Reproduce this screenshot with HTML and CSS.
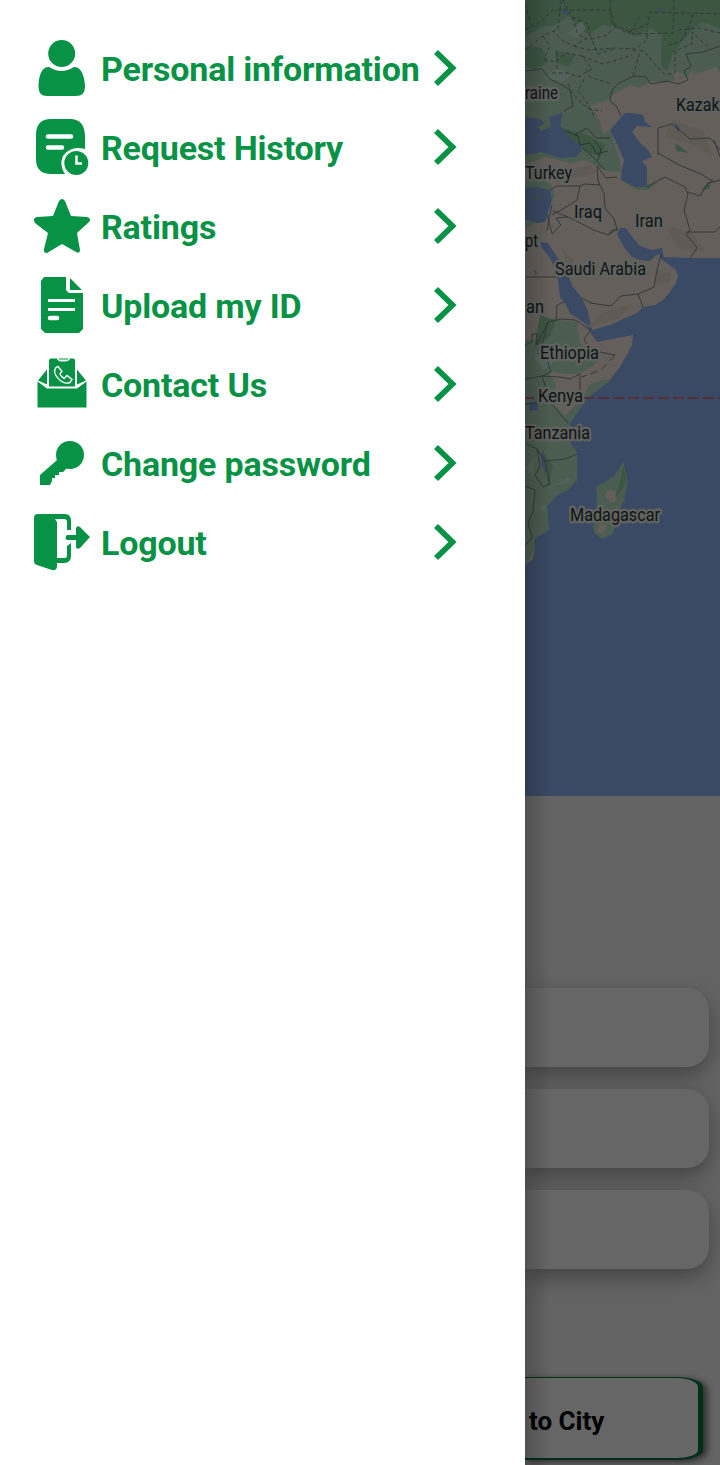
FILE: index.html
```html
<!DOCTYPE html>
<html lang="en">
<head>
<meta charset="utf-8">
<title>Menu</title>
<link rel="stylesheet" href="styles.css">
</head>
<body>
<div class="screen">
  <nav class="drawer">
    <a class="item"><svg class="icon" viewBox="0 0 56 56"><circle cx="27.700" cy="13.500" r="13.500"/><path d="M15 27Q27.500 35 40 27C47 26 51 37 51 47Q51 56 42 56H13Q4.500 56 4.500 47C4.500 36 8 26 15 27Z"/></svg><span class="label">Personal information</span><svg class="chevron" viewBox="0 0 24 38"><path d="M3 3L19.500 19L3 35"/></svg></a>
    <a class="item"><svg class="icon" viewBox="0 0 56 56"><path d="M17 0H36Q51 0 51 18V30Q37 26 29 37Q25 46 31 55H17Q2 55 2 40V16Q2 0 17 0Z"/><path class="cut" d="M14 17.500H37M14 28.500H28"/><circle cx="42.300" cy="44" r="12"/><path class="cut thin" d="M42.500 36.500V44.500H48"/></svg><span class="label">Request History</span><svg class="chevron" viewBox="0 0 24 38"><path d="M3 3L19.500 19L3 35"/></svg></a>
    <a class="item"><svg class="icon" viewBox="0 -1 56 56"><path d="M25 2Q28 -2 31 2L37 17L53 18Q58 20 55 23L43 34L46 51Q46 55 42 53L28 45L13 54Q9 54 10 50L14 34L1 24Q-2 19 3 18L19 17Z"/></svg><span class="label">Ratings</span><svg class="chevron" viewBox="0 0 24 38"><path d="M3 3L19.500 19L3 35"/></svg></a>
    <a class="item"><svg class="icon" viewBox="0 0 56 56"><path d="M10 0H32V13L35 16H49V52L45 56H11L7 52V4ZM36 1L48 13H36Z"/><path class="cut butt" d="M14 23.500H41M14 32.500H41"/><path class="cut" d="M16 41H23"/></svg><span class="label">Upload my ID</span><svg class="chevron" viewBox="0 0 24 38"><path d="M3 3L19.500 19L3 35"/></svg></a>
    <a class="item"><svg class="icon" viewBox="0 0 56 56"><path d="M15 5Q15 3 17 3H23Q24 6 27 6H31Q35 6 36 3H39Q41 3 41 5V31H15ZM25 3H34V4H25ZM13 14V29L4 25ZM43 14L52 25L43 29ZM3.500 26L13 33H43L52.500 26V52H3.500Z" transform="translate(0 -.5)"/><path class="phone" d="M22 11.500C17 17.500 28 29.500 36 26.500L38 23.500L33 19.500L30 22.500Q26 19.500 26 17.500L28 15.500L24 10.500Z"/></svg><span class="label">Contact Us</span><svg class="chevron" viewBox="0 0 24 38"><path d="M3 3L19.500 19L3 35"/></svg></a>
    <a class="item"><svg class="icon" viewBox="0 0 56 56"><circle cx="36" cy="20" r="14"/><path d="M22 25L22 26L6 40V50H16L18 46V43H21V40H25V37H29L34 32Z"/></svg><span class="label">Change password</span><svg class="chevron" viewBox="0 0 24 38"><path d="M3 3L19.500 19L3 35"/></svg></a>
    <a class="item"><svg class="icon" viewBox="0 0 56 56"><path d="M4 0H31Q37 0 37 7V16H33V8Q33 5 30 5H21L23 8V44H31Q33 44 33 41V32L37 29V42Q37 49 30 49H23V53Q22 57 18 56L3 51Q0 50 0 47V4Q0 0 4 0Z"/><path d="M33 21H42V14Q43 11 46 13L56 23L46 34Q43 36 42 33V26H33Q30 24 33 21Z"/></svg><span class="label">Logout</span><svg class="chevron" viewBox="0 0 24 38"><path d="M3 3L19.500 19L3 35"/></svg></a>
  </nav>
  <main class="page">
    <svg class="map" viewBox="525 0 195 796">
      <path class="land" d="M525 0H720V258H690L664 257L662 248L652 250L640 246L633 238L626 228H620L617 234L624 247L632 257L640 260L650 261L655 256L660 254L661 259L668 264L676 270L678 277L676 283L669 293L663 300L655 305L643 307L637 313L610 325L592 330L588 312L582 298L573 287L567 272L559 260L548 243L541 242V247L550 258L557 273L560 297L565 303L570 313L587 325L592 335L597 342L633 335L632 345L620 367L607 383L587 398L570 423V442L577 453V480L568 490L557 495L547 506L549 530L535 538V550L532 560L525 565Z"/>
      <path class="green" d="M525 0H720V72L715 67L708 75L690 72L686 80L665 83L652 81L640 88L630 85L612 95L608 100L590 107L597 115L600 122L603 134L610 130L618 155L622 172L608 171L598 167L585 160L570 163L545 157L525 165V125ZM525 180L537 178L551 184L555 195L549 208L545 190L525 188ZM525 222H537L529 227H525ZM621 180L634 187L658 182L648 190H637ZM525 340L538 339L548 325L558 320L577 322L580 343L600 360L582 373L568 374L548 372L556 385L549 400L565 416L583 398L589 385L604 379L610 381L587 398L570 423V442L577 453V480L568 490L557 495L547 506L549 530L535 538V550L525 565Z"/>
      <path class="forest" d="M525 0H720V28L702 22L690 32L672 54L667 71L661 65L662 35L650 28L635 37L618 27L602 25L589 35L568 16L554 25L540 27L525 38ZM527 46L542 48L548 62L535 70L525 66ZM555 50L575 55L569 67L557 63ZM540 315L556 320L550 336L534 348ZM559 127L585 134L605 145L601 157L580 149ZM701 190L713 178L709 189ZM543 452L553 466L548 487ZM675 143L689 153L677 151Z"/>
      <path class="steppe" d="M608 101L596 105L601 118L605 134L612 127L606 115ZM590 106L600 102L604 109ZM616 95L646 88L682 78L717 67L720 80V111L690 119L674 111L650 117L631 103ZM672 70L685 75L675 80Z"/>
      <path class="desert" d="M672 120L704 132L713 157L688 143L665 137ZM555 172L590 165L598 172L570 179ZM562 248L575 261L570 271ZM665 226L692 233L705 252L679 249ZM655 268L672 274L669 283L656 284ZM586 328L602 313L634 303L620 318Z"/>
      <path class="patch" d="M568 33L582 21L586 29L575 38ZM543 78L557 68L571 75L563 82ZM534 358L544 350L554 363L544 370ZM552 486L569 477L572 482ZM539 508L546 503L544 513ZM526 467L535 457L533 477Z"/>
      <path class="sea" d="M525 117L540 119L545 123L538 127L541 131L551 127L549 117L563 113L560 125L570 138L582 146L581 152L575 157L560 158L540 152L525 155ZM625 113H632L643 115L645 122L652 127L637 126L632 132L640 143L648 150L652 157L642 161L647 167V187H635L621 180L622 170L624 160L615 140L610 130ZM525 188L537 187L550 190L552 200L549 210L545 222L537 223L525 220ZM561 8L569 12L567 15L562 13ZM657 10L662 8L661 12ZM674 122L680 128L678 133ZM681 117L686 118ZM530 402L537 401L538 410L529 411ZM543 450L547 466L545 475L541 459ZM533 269L537 272L536 275Z"/>
      <path class="green" d="M623 462L618 470L615 475L605 482L596 487L597 505L596 515L593 527L595 534L602 539L613 534L617 516L624 500L628 481Z"/>
      <path class="forest" d="M623 466L621 478L614 500L623 488L627 480ZM533 198L541 196L537 200Z"/>
      <path class="steppe" d="M607 490L615 491L616 501L610 503L605 496ZM600 523L608 526L602 534L597 531ZM595 375L614 357L623 346L629 352L616 369L605 379ZM552 378L577 374L582 379L578 385L563 382Z"/>
      <path class="border" d="M525 71L542 69L550 79L564 86L570 90L573 106L564 111M720 46L703 52L686 54L691 66L684 71L688 80L678 84L667 81L651 84L646 77L634 76L619 83L612 90L610 101L617 107L621 116M658 155V128L672 124L690 139L710 138L720 150M597 166L606 178L617 177M550 190L556 186L580 186L585 184L600 185L604 193L605 208L614 219L617 229L608 235L594 230L568 217L553 211M580 186L577 200L568 206L552 215M552 205L547 230M547 214L552 234L561 225L556 218L568 217M597 167L598 180L600 185M647 187L665 177L685 187L688 194L684 210L690 230L686 235L692 241L697 248L690 258M688 192L700 196L708 183L720 180M686 232L715 232L720 227M658 153L679 165L701 174L714 182M714 140L720 157M608 235L612 230L618 230M582 298L591 303M590 303L611 306L621 296L638 294L654 287L656 275L661 254M638 294L643 307M525 277H558M525 345L532 342V334L537 334V345L548 322L561 319L575 320L591 330L584 339L590 350L615 355M556 320L557 305L566 301M548 322L542 345L551 372L542 376L525 379M542 376L560 377L570 379L580 374L580 398M542 376L551 403L568 423M525 404L538 403M525 443L537 449L540 466L535 475L543 487L550 484L545 461L565 459L577 454M525 486L535 490L533 512L528 522L532 538L525 545M537 449L545 461"/>
      <path class="border horn" d="M615 355L601 370L582 377"/>
      <path class="border dashed" d="M525 30L542 21L552 10H610L615 26L627 33L648 24L650 12L720 14M525 50L543 36L558 29L561 0M530 20L525 5M563 0L572 17L588 24L590 35L575 46L563 41L553 31M610 0L612 24L635 34L673 33L674 0M574 46L589 50L614 48L635 49L647 40L647 30M543 36L550 46L544 59L555 62L566 53L582 56L592 69L578 77L568 73L550 73M557 52V71M572 17L578 34L588 40L607 35L616 26M586 69L590 77L612 84M633 50L644 51L658 68L665 75L675 73L675 51L692 44V32L710 49M590 35L598 54L613 49M582 56L602 64L614 61L632 55M640 17L629 34M584 79L578 91L586 101L594 116M568 84L573 94L588 109L602 111M678 30L700 28L720 33M693 14L688 30L680 42L668 45M633 76L640 51"/>
      <path class="border small" d="M565 131L578 136L580 145L590 143L597 154L608 151M575 135L587 128L596 138L610 138M583 148L591 155L605 170M594 140L601 149L598 160"/>
      <path class="equator" d="M523 398H720"/>
      <g class="names">
        <text x="525" y="99" textLength="33" lengthAdjust="spacingAndGlyphs">raine</text><text x="676" y="111" textLength="43.500" lengthAdjust="spacingAndGlyphs">Kazak</text><text x="525" y="179" textLength="47" lengthAdjust="spacingAndGlyphs">Turkey</text><text x="574" y="218" textLength="28" lengthAdjust="spacingAndGlyphs">Iraq</text><text x="635" y="227" textLength="28" lengthAdjust="spacingAndGlyphs">Iran</text><text x="525" y="247" textLength="13" lengthAdjust="spacingAndGlyphs">pt</text><text x="555" y="275" textLength="91" lengthAdjust="spacingAndGlyphs">Saudi Arabia</text><text x="526" y="313" textLength="18" lengthAdjust="spacingAndGlyphs">an</text><text x="540" y="359" textLength="59" lengthAdjust="spacingAndGlyphs">Ethiopia</text><text x="538" y="402" textLength="45" lengthAdjust="spacingAndGlyphs">Kenya</text><text x="525" y="439" textLength="65" lengthAdjust="spacingAndGlyphs">Tanzania</text><text x="570" y="521" textLength="90" lengthAdjust="spacingAndGlyphs">Madagascar</text>
      </g>
    </svg>
    <section class="cards"><div class="card"></div><div class="card"></div><div class="card"></div></section>
    <button class="city">to City</button>
  </main>
</div>
</body>
</html>
```
FILE: styles.css
```css
* { box-sizing: border-box; }
body { margin: 0; font-family: Roboto, sans-serif; }
.screen { display: flex; width: 720px; height: 1465px; overflow: hidden; background: #fff; }
.drawer { width: 525px; flex: none; padding: 29px 68px 0 34px; }
.item { display: flex; align-items: center; height: 79px; color: #079245; }
.icon { width: 56px; height: 56px; flex: none; margin-bottom: 2px; fill: #079245; overflow: visible; }
.icon .cut { fill: none; stroke: #fff; stroke-width: 4.500px; stroke-linecap: round; }
.icon .butt { stroke-width: 3px; stroke-linecap: butt; }
.icon .thin { stroke-width: 2.500px; stroke-linecap: butt; }
.icon .phone { fill: none; stroke: #fff; stroke-width: 1.400px; }
.label { flex: 1; margin-left: 11px; font-size: 34px; line-height: 40px; font-weight: 700; letter-spacing: -.18px; white-space: nowrap; }
.chevron { width: 24px; height: 38px; flex: none; margin-bottom: 2px; fill: none; stroke: #079245; stroke-width: 5.700px; }
.page { position: relative; width: 195px; height: 1465px; overflow: hidden; background: #646464; }
.page::after { content: ""; position: absolute; inset: 0 auto 0 0; width: 26px; background: linear-gradient(90deg, rgba(0,0,0,.2), transparent); }
.map { display: block; width: 195px; height: 796px; background: #3a4a64; }
.land { fill: #645f5b; }
.green { fill: #4b5d50; }
.forest { fill: #3c5642; }
.steppe { fill: #645f5b; }
.desert { fill: #5f5b54; }
.patch { fill: #52645a; }
.sea { fill: #3a4a64; }
.border { fill: none; stroke: #303434; stroke-width: .9px; }
.dashed { stroke-dasharray: 4 2.500; }
.horn { stroke-dasharray: 8 4; }
.small { stroke-width: 1px; }
.equator { stroke: #562f3d; stroke-width: 2px; stroke-dasharray: 11 4; }
.names { font: 400 18px Roboto, sans-serif; fill: #111414; stroke: #5f625f; stroke-width: 5px; stroke-linejoin: round; paint-order: stroke; }
.cards { display: flex; flex-direction: column; gap: 22px; padding: 192px 11px 0 0; }
.card { height: 79px; border-radius: 0 22px 22px 0; background: #666; box-shadow: 0 8px 22px rgba(0,0,0,.34); }
.city { display: block; width: 178px; height: 83px; margin: 108px 0 0; padding: 5px 0 0 4px; border: solid #003019; border-width: 1px 5px 2px 0; border-radius: 0 26px 26px 0 / 0 10px 10px 0; background: #666; box-shadow: 4px 2px 7px rgba(0,0,0,.55); font: 700 26px/30px Roboto, sans-serif; color: #000; text-align: left; }
```
